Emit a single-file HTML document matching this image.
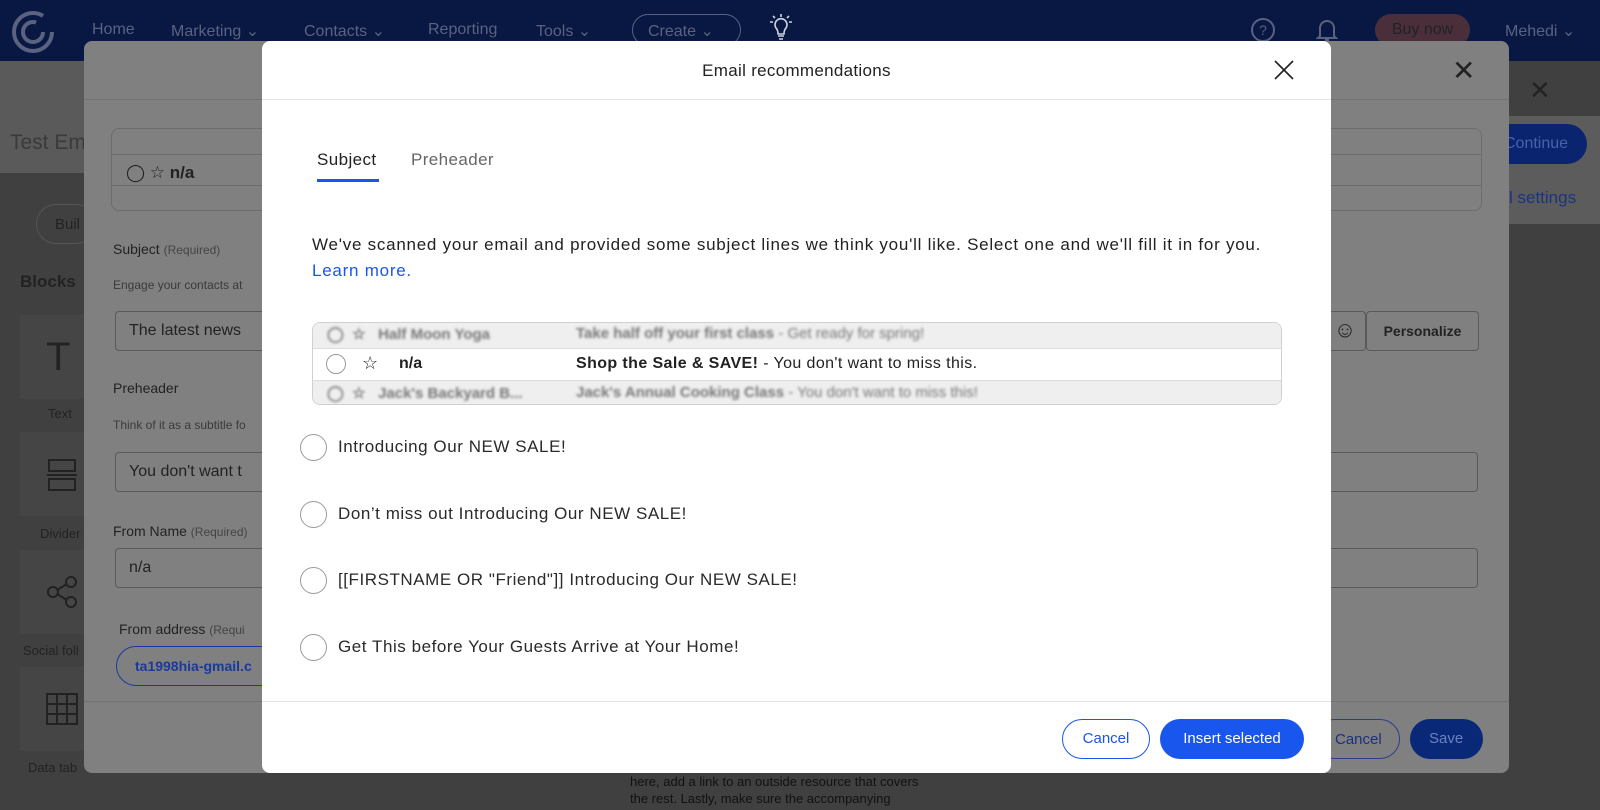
<!DOCTYPE html>
<html><head><meta charset="utf-8"><style>
*{box-sizing:border-box;margin:0;padding:0}
body{width:1600px;height:810px;overflow:hidden;position:relative;background:#404040;font-family:"Liberation Sans",sans-serif;color:#222}
.a{position:absolute}
.nav{left:0;top:0;width:1600px;height:61px;background:#081842;color:#5a6280;font-size:16px}
.nav span{position:absolute;top:21px}
.m2{left:84px;top:41px;width:1425px;height:732px;background:#808080;border-radius:8px}
.g{color:#3a3a3a}
.inp{border:1px solid #5a5a5a;border-radius:4px;height:40px}
.modal{left:262px;top:41px;width:1069px;height:732px;background:#fff;border-radius:8px}
.radio{width:27px;height:27px;border:1.5px solid #9a9a9a;border-radius:50%}
.opt{font-size:17px;color:#2a2a2a;letter-spacing:0.55px}
.blur{filter:blur(1.3px);color:#777;font-weight:bold}
</style></head><body>
<div class="a nav">
 <svg class="a" style="left:10px;top:9px" width="46" height="46" viewBox="0 0 46 46"><circle cx="23" cy="23" r="19" fill="none" stroke="#5a6280" stroke-width="4" stroke-dasharray="100 20"/><circle cx="23" cy="23" r="10" fill="none" stroke="#5a6280" stroke-width="4" stroke-dasharray="50 13"/></svg>
 <span style="left:92px">Home</span><span style="left:171px">Marketing ⌄</span><span style="left:304px">Contacts ⌄</span><span style="left:428px">Reporting</span><span style="left:536px">Tools ⌄</span>
 <div class="a" style="left:632px;top:14px;width:109px;height:32px;border:1.5px solid #5a6280;border-radius:16px"></div><span style="left:648px">Create ⌄</span>
 <svg class="a" style="left:767px;top:12px" width="28" height="30" viewBox="0 0 28 30"><path d="M9 16a6 6 0 1 1 10 0c-2 2-2 4-2 6h-6c0-2 0-4-2-6zM11 24h6M12 27h4M14 2v3M3 10h3M22 10h3M6 4l2 2M22 4l-2 2" fill="none" stroke="#cfd3dd" stroke-width="1.6"/></svg>
 <div class="a" style="left:1251px;top:18px;width:24px;height:24px;border:2px solid #5a6280;border-radius:50%;font-size:14px;text-align:center;line-height:20px">?</div>
 <svg class="a" style="left:1316px;top:17px" width="22" height="26" viewBox="0 0 22 26"><path d="M4 19V11a7 7 0 0 1 14 0v8l2 2H2zM9 23h4" fill="none" stroke="#5a6280" stroke-width="2"/></svg>
 <div class="a" style="left:1375px;top:14px;width:95px;height:32px;background:#4a2f3a;border-radius:16px;color:#222;text-align:center;line-height:32px">Buy now</div>
 <span style="left:1505px">Mehedi ⌄</span>
</div>
<div class="a" style="left:0;top:61px;width:84px;height:112px;background:#5a5a5a"></div>
<div class="a g" style="left:10px;top:131px;font-size:21px">Test Em</div>
<div class="a" style="left:36px;top:204px;width:60px;height:40px;border:1px solid #555;border-radius:20px;padding:11px 18px;font-size:15px;color:#222">Buil</div>
<div class="a" style="left:20px;top:272px;font-size:17px;font-weight:bold;color:#222">Blocks</div>
<div class="a" style="left:20px;top:315px;width:64px;height:84px;background:#454545"></div>
<div class="a" style="left:20px;top:432px;width:64px;height:84px;background:#454545"></div>
<div class="a" style="left:20px;top:550px;width:64px;height:84px;background:#454545"></div>
<div class="a" style="left:20px;top:667px;width:64px;height:84px;background:#454545"></div>
<div class="a" style="left:46px;top:335px;font-size:40px;color:#222;font-weight:100">T</div>
<svg class="a" style="left:46px;top:459px" width="32" height="32" viewBox="0 0 32 32"><rect x="3" y="1" width="26" height="11" fill="none" stroke="#222" stroke-width="2"/><path d="M1 16h30" stroke="#222" stroke-width="2"/><rect x="3" y="20" width="26" height="11" fill="none" stroke="#222" stroke-width="2"/></svg>
<svg class="a" style="left:46px;top:576px" width="32" height="32" viewBox="0 0 32 32"><circle cx="7" cy="16" r="5" fill="none" stroke="#222" stroke-width="2"/><circle cx="25" cy="6" r="5" fill="none" stroke="#222" stroke-width="2"/><circle cx="25" cy="26" r="5" fill="none" stroke="#222" stroke-width="2"/><path d="M11 14l10-6M11 18l10 6" stroke="#222" stroke-width="2"/></svg>
<svg class="a" style="left:46px;top:693px" width="32" height="32" viewBox="0 0 32 32"><rect x="1" y="1" width="30" height="30" fill="none" stroke="#222" stroke-width="2"/><path d="M1 11h30M1 21h30M11 1v30M21 1v30" stroke="#222" stroke-width="2"/></svg>
<div class="a" style="left:48px;top:406px;font-size:13px;color:#222">Text</div>
<div class="a" style="left:40px;top:526px;font-size:13px;color:#222">Divider</div>
<div class="a" style="left:23px;top:643px;font-size:13px;color:#222">Social foll</div>
<div class="a" style="left:28px;top:760px;font-size:13px;color:#222">Data tab</div>
<div class="a" style="left:1509px;top:61px;width:91px;height:55px;background:#404040"></div>
<div class="a" style="left:1509px;top:116px;width:91px;height:108px;background:#5c5c5c"></div>
<div class="a" style="left:1529px;top:75px;font-size:26px;color:#222">✕</div>
<div class="a" style="left:1480px;top:124px;width:107px;height:40px;background:#0a2470;border-radius:20px;color:#4a62a8;font-size:16px;padding:11px 24px">Continue</div>
<div class="a" style="left:1509px;top:188px;font-size:17px;color:#1a3480">l settings</div>
<div class="a" style="left:630px;top:773px;font-size:13px;color:#111;line-height:17px">here, add a link to an outside resource that covers<br>the rest. Lastly, make sure the accompanying</div>
<div class="a m2">
 <div class="a" style="left:0;top:58px;width:100%;height:1px;background:#737373"></div>
 <div class="a" style="left:1368px;top:13px;font-size:28px;color:#222;font-weight:100">✕</div>
 <div class="a" style="left:27px;top:87px;width:1371px;height:83px;border:1px solid #6c6c6c;border-radius:8px"></div>
 <div class="a" style="left:27px;top:113px;width:1371px;height:1px;background:#6c6c6c"></div>
 <div class="a" style="left:27px;top:144px;width:1371px;height:1px;background:#6c6c6c"></div>
 <div class="a" style="left:42px;top:122px;font-size:17px;color:#222">◯ ☆ <b>n/a</b></div>
 <div class="a" style="left:29px;top:200px;font-size:14px;color:#222">Subject <span style="font-size:12px;color:#444">(Required)</span></div>
 <div class="a" style="left:29px;top:237px;font-size:12px;color:#3a3a3a">Engage your contacts at</div>
 <div class="a inp" style="left:31px;top:270px;width:200px;padding:10px 13px;font-size:16px;color:#222">The latest news</div>
 <div class="a" style="left:29px;top:339px;font-size:14px;color:#222">Preheader</div>
 <div class="a" style="left:29px;top:377px;font-size:12px;color:#3a3a3a">Think of it as a subtitle fo</div>
 <div class="a inp" style="left:31px;top:411px;width:200px;padding:10px 13px;font-size:16px;color:#222">You don't want t</div>
 <div class="a inp" style="left:1150px;top:411px;width:244px"></div>
 <div class="a" style="left:29px;top:482px;font-size:14px;color:#222">From Name <span style="font-size:12px;color:#444">(Required)</span></div>
 <div class="a inp" style="left:31px;top:507px;width:200px;padding:10px 13px;font-size:16px;color:#222">n/a</div>
 <div class="a inp" style="left:1150px;top:507px;width:244px"></div>
 <div class="a" style="left:35px;top:580px;font-size:14px;color:#222">From address <span style="font-size:12px;color:#444">(Requi</span></div>
 <div class="a" style="left:32px;top:605px;width:200px;height:40px;border:1.5px solid #1a3a9a;border-radius:20px;padding:11px 18px;font-size:14px;font-weight:bold;color:#1a3a9a">ta1998hia-gmail.c</div>
 <div class="a inp" style="left:1240px;top:270px;width:42px;font-size:22px;text-align:center;padding-top:5px;color:#222">☺</div>
 <div class="a inp" style="left:1282px;top:270px;width:113px;font-size:14px;font-weight:bold;text-align:center;padding-top:11px;color:#222">Personalize</div>
 <div class="a" style="left:0;top:660px;width:100%;height:1px;background:#737373"></div>
 <div class="a" style="left:1230px;top:678px;width:86px;height:40px;border:1.5px solid #2a3f8a;border-radius:20px;color:#1a2f80;font-size:15px;padding:11px 20px">Cancel</div>
 <div class="a" style="left:1326px;top:678px;width:73px;height:40px;background:#0a2878;border-radius:20px;color:#6b80c0;font-size:15px;padding:11px 19px">Save</div>
</div>
<div class="a modal">
 <div class="a" style="left:0;top:20px;width:100%;text-align:center;font-size:17px;color:#222;letter-spacing:0.3px">Email recommendations</div>
 <svg class="a" style="left:1012px;top:19px" width="20" height="20" viewBox="0 0 20 20"><path d="M1 1L19 19M19 1L1 19" stroke="#222" stroke-width="1.6"/></svg>
 <div class="a" style="left:0;top:58px;width:100%;height:1px;background:#e3e3e3"></div>
 <div class="a" style="left:55px;top:109px;font-size:17px;color:#222;letter-spacing:0.4px">Subject</div>
 <div class="a" style="left:55px;top:138px;width:62px;height:3px;background:#1856ed"></div>
 <div class="a" style="left:149px;top:109px;font-size:17px;color:#666;letter-spacing:0.4px">Preheader</div>
 <div class="a" style="left:50px;top:191px;font-size:17px;color:#222;line-height:26px;letter-spacing:0.75px">We've scanned your email and provided some subject lines we think you'll like. Select one and we'll fill it in for you.<br><span style="color:#1856ed">Learn more.</span></div>
 <div class="a" style="left:50px;top:281px;width:970px;height:83px;border:1px solid #d0d0d0;border-radius:8px;overflow:hidden">
  <div class="a" style="left:0;top:0;width:100%;height:26px;background:#efefef;border-bottom:1px solid #ddd"></div>
  <div class="a" style="left:0;top:57px;width:100%;height:26px;background:#efefef;border-top:1px solid #ddd"></div>
  <div class="a blur" style="left:14px;top:2px;font-size:15px">◯ &nbsp;☆ &nbsp;&nbsp;Half Moon Yoga</div>
  <div class="a blur" style="left:263px;top:2px;font-size:15px">Take half off your first class <span style="font-weight:normal">- Get ready for spring!</span></div>
  <div class="a" style="left:13px;top:31px;width:20px;height:20px;border:1.5px solid #999;border-radius:50%"></div>
  <div class="a" style="left:49px;top:30px;font-size:18px;color:#222">☆</div>
  <div class="a" style="left:86px;top:32px;font-size:16px;font-weight:bold;color:#222">n/a</div>
  <div class="a" style="left:263px;top:32px;font-size:16px;color:#222;letter-spacing:0.4px"><b>Shop the Sale &amp; SAVE!</b> - You don't want to miss this.</div>
  <div class="a blur" style="left:14px;top:61px;font-size:15px">◯ &nbsp;☆ &nbsp;&nbsp;Jack's Backyard B...</div>
  <div class="a blur" style="left:263px;top:61px;font-size:15px">Jack's Annual Cooking Class <span style="font-weight:normal">- You don't want to miss this!</span></div>
 </div>
 <div class="a radio" style="left:38px;top:393px"></div><div class="a opt" style="left:76px;top:396px">Introducing Our NEW SALE!</div>
 <div class="a radio" style="left:38px;top:460px"></div><div class="a opt" style="left:76px;top:463px">Don’t miss out Introducing Our NEW SALE!</div>
 <div class="a radio" style="left:38px;top:526px"></div><div class="a opt" style="left:76px;top:529px">[[FIRSTNAME OR "Friend"]] Introducing Our NEW SALE!</div>
 <div class="a radio" style="left:38px;top:593px"></div><div class="a opt" style="left:76px;top:596px">Get This before Your Guests Arrive at Your Home!</div>
 <div class="a" style="left:0;top:660px;width:100%;height:1px;background:#e3e3e3"></div>
 <div class="a" style="left:800px;top:678px;width:88px;height:40px;border:1px solid #1856ed;border-radius:20px;color:#1856ed;font-size:15px;text-align:center;line-height:38px">Cancel</div>
 <div class="a" style="left:898px;top:678px;width:144px;height:40px;background:#1856ed;border-radius:20px;color:#fff;font-size:15px;text-align:center;line-height:40px">Insert selected</div>
</div>
</body></html>
